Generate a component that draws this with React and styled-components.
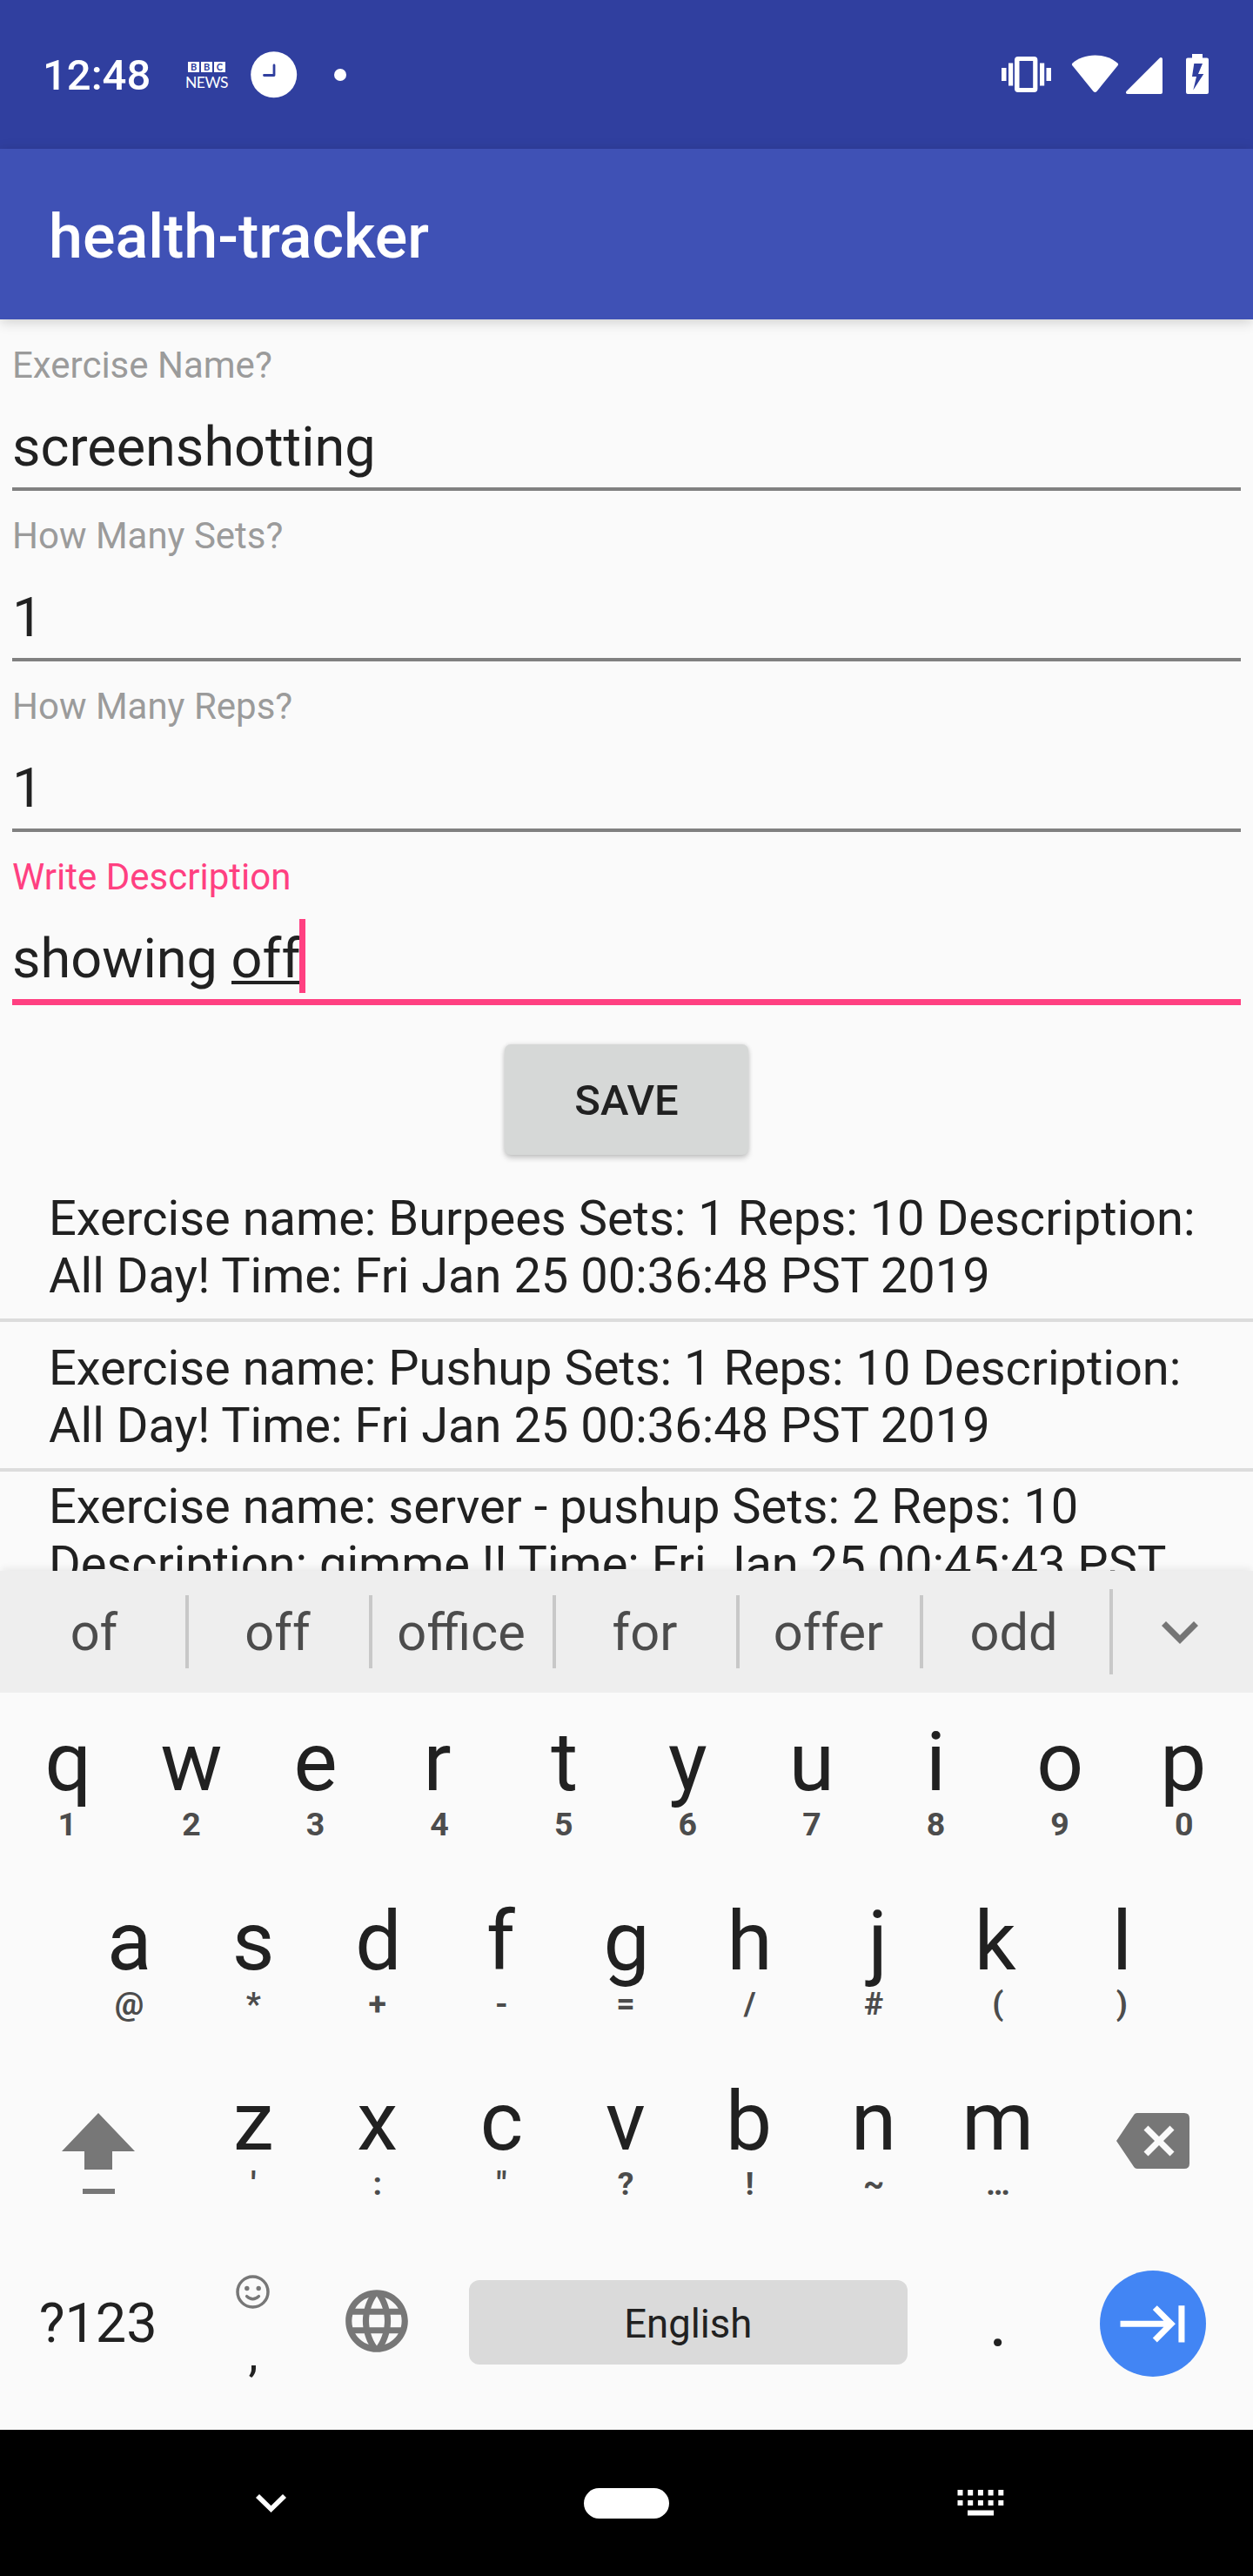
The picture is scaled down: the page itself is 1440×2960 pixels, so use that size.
import React from "react";
import styled, { createGlobalStyle, css } from "styled-components";

const GlobalStyle = createGlobalStyle`
  * { box-sizing: border-box; }
  body { margin: 0; background: #fafafa; }
`;

const Screen = styled.div`
  width: 1440px;
  height: 2960px;
  display: flex;
  flex-direction: column;
  overflow: hidden;
  background: #fafafa;
  color: #212121;
  font-family: Roboto, "Noto Sans", sans-serif;
`;

const StatusBar = styled.header`
  flex: none;
  height: 171px;
  padding: 0 51px 0 49px;
  display: flex;
  align-items: center;
  justify-content: space-between;
  background: #303f9f;
  color: #fff;
`;

const StatusGroup = styled.div`
  display: flex;
  align-items: center;
`;

const Clock = styled.span`
  width: 164px;
  font-size: 49px;
  line-height: 58px;
  font-weight: 500;
  padding-top: 2px;
`;

const News = styled.div`
  width: 49px;
  margin-right: 26px;
  display: flex;
  flex-direction: column;
  align-items: center;
  gap: 3px;
`;

const NewsBlocks = styled.div`
  display: flex;
  gap: 2px;
`;

const NewsBlock = styled.span`
  width: 13px;
  height: 12px;
  background: #fff;
  color: #303f9f;
  font: 700 11px/12px Lato, sans-serif;
  text-align: center;
`;

const NewsWord = styled.span`
  font: 400 17.5px/17px Lato, sans-serif;
  letter-spacing: -0.5px;
  height: 15px;
  white-space: nowrap;
`;

const MoreDot = styled.span`
  width: 14px;
  height: 14px;
  margin-left: 42px;
  border-radius: 50%;
  background: #fff;
`;

const Icon = styled.svg`
  display: block;
  flex: none;
  fill: currentColor;
`;

const AppBar = styled.div`
  flex: none;
  height: 196px;
  padding: 0 56px;
  display: flex;
  align-items: center;
  background: #3f51b5;
  color: #fff;
  box-shadow: 0 3px 14px rgba(0, 0, 0, 0.18);
  z-index: 1;
`;

const Title = styled.h1`
  margin: 6px 0 0;
  font-size: 70px;
  line-height: 82px;
  font-weight: 500;
`;

const Content = styled.main`
  flex: none;
  height: 1438px;
  display: flex;
  flex-direction: column;
  overflow: hidden;
`;

const Form = styled.form`
  flex: none;
  padding: 28px 14px 0;
  display: flex;
  flex-direction: column;
`;

const Field = styled.label`
  height: 196px;
  display: flex;
  flex-direction: column;
`;

const FieldLabel = styled.span`
  font-size: 42px;
  line-height: 50px;
  color: ${(p) => (p.$active ? "#ff4081" : "#9b9b9b")};
`;

const FieldValue = styled.span`
  height: 119px;
  padding-top: 32px;
  display: flex;
  align-items: flex-start;
  white-space: pre;
  font-size: 63px;
  line-height: 74px;
  font-variant-ligatures: none;
  border-bottom: 4px solid #808080;
  ${(p) =>
    p.$active &&
    css`
      height: 122px;
      border-bottom: 7px solid #ff4081;
    `}
`;

const Composing = styled.span`
  height: 74px;
  background: linear-gradient(#212121, #212121) 0 62px / 100% 4px no-repeat;
`;

const Caret = styled.span`
  width: 7px;
  height: 85px;
  margin: -9px 0 0 -1px;
  background: #ff4081;
`;

const SaveButton = styled.button`
  flex: none;
  align-self: center;
  width: 280px;
  height: 127px;
  margin-top: 21px;
  padding: 3px 0 0;
  border: 0;
  border-radius: 7px;
  background: #d6d8d7;
  color: #212121;
  font: 500 49px/58px Roboto, sans-serif;
  box-shadow: 0 4px 6px rgba(0, 0, 0, 0.18), 0 0 5px rgba(0, 0, 0, 0.12);
`;

const List = styled.ul`
  flex: none;
  margin: 20px 0 0;
  padding: 0;
  list-style: none;
`;

const Item = styled.li`
  height: 172px;
  padding: ${(p) => (p.$tall ? 8 : 21)}px 56px 0;
  border-bottom: 4px solid #dcdcdc;
  font-size: 56px;
  line-height: 65.6px;
  white-space: pre-line;
`;

const Suggestions = styled.div`
  flex: none;
  height: 140px;
  padding-left: 6px;
  display: flex;
  align-items: center;
  background: #eeeeee;
  box-shadow: 0 -5px 8px -2px rgba(0, 0, 0, 0.07);
`;

const Suggestion = styled.span`
  width: 211px;
  height: 84px;
  padding: 4px 3px 0 0;
  text-align: center;
  font-size: 59.5px;
  line-height: 78px;
  color: #4c4c4c;
  border-right: ${(p) => (p.$last ? 0 : 4)}px solid #c8c8c8;
`;

const Expand = styled.span`
  flex: 1;
  height: 98px;
  margin-left: 3px;
  display: flex;
  align-items: center;
  padding: 2px 0 0 56px;
  border-left: 4px solid #c8c8c8;
  color: #757575;
`;

const Keyboard = styled.section`
  flex: none;
  height: 847px;
  padding: 17px 8px 0 6px;
`;

const KeyRow = styled.div`
  height: 206.3px;
  display: flex;
  justify-content: center;
`;

const Key = styled.div`
  flex: none;
  width: ${(p) => p.$w || 142.6}px;
  height: 206px;
  display: flex;
  flex-direction: column;
  align-items: center;
`;

const Letter = styled.span`
  height: 106px;
  padding-top: 8px;
  margin-left: ${(p) => p.$shift * 2}px;
  font-size: 94.5px;
  line-height: 110px;
`;

const Hint = styled.span`
  padding-top: 6px;
  font-size: 37.5px;
  line-height: 44px;
  font-weight: 700;
  color: #4c4c4c;
`;

const ShiftKey = styled(Key)`
  padding-top: 53px;
  color: #777;
`;

const SymbolsLabel = styled.span`
  padding-top: 52px;
  font-size: 63px;
  line-height: 74px;
`;

const EmojiKey = styled(Key)`
  padding-top: 33px;
  color: #777;
`;

const Comma = styled.span`
  margin-top: 19px;
  font-size: 56px;
  line-height: 66px;
  color: #212121;
`;

const GlobeKey = styled(Key)`
  padding: 43px 2px 0 0;
  color: #777;
`;

const SpaceKey = styled.div`
  flex: none;
  width: 504px;
  height: 97px;
  margin: 39px 33px 0 34px;
  padding-top: 4px;
  display: flex;
  align-items: center;
  justify-content: center;
  border-radius: 12px;
  background: #dadada;
  font-size: 45.5px;
`;

const Period = styled.span`
  padding-top: 38px;
  font-size: 82px;
  line-height: 98px;
`;

const NextButton = styled.div`
  width: 122px;
  height: 122px;
  margin-top: 28px;
  padding-left: 2px;
  display: flex;
  align-items: center;
  justify-content: center;
  border-radius: 50%;
  background: #4285f4;
  color: #fff;
`;

const NavBar = styled.nav`
  flex: none;
  height: 168px;
  padding: 0 286px 0 294px;
  display: flex;
  align-items: center;
  justify-content: space-between;
  background: #000;
  color: #fff;
`;

const HomePill = styled.span`
  width: 98px;
  height: 35px;
  margin-left: 11px;
  border-radius: 18px;
  background: #fff;
`;

const fields = [
  { label: "Exercise Name?", value: "screenshotting" },
  { label: "How Many Sets?", value: "1" },
  { label: "How Many Reps?", value: "1" },
];

const exercises = [
  "Exercise name: Burpees Sets: 1 Reps: 10 Description:\nAll Day! Time: Fri Jan 25 00:36:48 PST 2019",
  "Exercise name: Pushup Sets: 1 Reps: 10 Description:\nAll Day! Time: Fri Jan 25 00:36:48 PST 2019",
  "Exercise name: server - pushup Sets: 2 Reps: 10\nDescription: gimme !! Time: Fri Jan 25 00:45:43 PST",
];

const suggestions = ["of", "off", "office", "for", "offer", "odd"];

const rows = [
  ["q1", "w2", "e3", "r4", "t5", "y6", "u7", "i8", "o9", "p0"],
  ["a@", "s*", "d+", "f-", "g=", "h/", "j#", "k(", "l)"],
  ["z'", "x:", 'c"', "v?", "b!", "n~", "m…"],
];

// Keeps letters with uneven side bearings visually centred over their hints.
const opticalShift = { q: 1, r: -2.5, t: 1, p: -1, d: 1, f: -1, g: 1, j: 4.5, k: -3, b: -1 };

const LetterKeys = ({ keys }) =>
  keys.map((k) => (
    <Key key={k}>
      <Letter $shift={opticalShift[k[0]] || 0}>{k[0]}</Letter>
      <Hint>{k[1]}</Hint>
    </Key>
  ));

export default function App() {
  return (
    <Screen>
      <GlobalStyle />
      <StatusBar>
        <StatusGroup>
          <Clock>12:48</Clock>
          <News>
            <NewsBlocks>
              <NewsBlock>B</NewsBlock>
              <NewsBlock>B</NewsBlock>
              <NewsBlock>C</NewsBlock>
            </NewsBlocks>
            <NewsWord>NEWS</NewsWord>
          </News>
          <Icon width="54" height="54" viewBox="0 0 54 54">
            <circle cx="26.700" cy="26.800" r="26.500" />
            <path
              d="M27 16V27.500H15.500"
              fill="none"
              stroke="#303f9f"
              strokeWidth="2.800"
              strokeLinecap="round"
              strokeLinejoin="round"
            />
          </Icon>
          <MoreDot />
        </StatusGroup>
        <Icon width="239" height="49" viewBox="1150 61 239 49">
          <path d="M1151 78h5.500v15h-5.500zM1159 72.500h5.200v26h-5.200zM1195 72.500h5.200v26h-5.200zM1202.500 78h5.500v15h-5.500z" />
          <path
            fillRule="evenodd"
            d="M1170 65h18.400a4 4 0 0 1 4 4v33a4 4 0 0 1-4 4h-18.400a4 4 0 0 1-4-4v-33a4 4 0 0 1 4-4zM1171.500 70v31h15.700v-31z"
          />
          <path d="M1232.600 72.500C1239 67 1248 63.500 1258.500 63.500S1278 67 1284.400 72.500Q1285.700 73.800 1284.600 75.300L1260.500 105Q1258.500 107 1256.500 105L1232.400 75.300Q1231.300 73.800 1232.600 72.500z" />
          <path d="M1296 108h38a2 2 0 0 0 2-2v-38c0-2-2-2.600-3.400-1.300l-38 38c-1.300 1.400-.6 3.300 1.400 3.300z" />
          <path
            fillRule="evenodd"
            d="M1370 62h12v4.500h5a2 2 0 0 1 2 2v37.500a2 2 0 0 1-2 2h-22a2 2 0 0 1-2-2v-37.500a2 2 0 0 1 2-2h5zM1372.300 73l-2.300 15h5l-3.700 15.500 12-18.500h-6.300l5-12z"
          />
        </Icon>
      </StatusBar>

      <AppBar>
        <Title>health-tracker</Title>
      </AppBar>

      <Content>
        <Form>
          {fields.map((f) => (
            <Field key={f.label}>
              <FieldLabel>{f.label}</FieldLabel>
              <FieldValue>{f.value}</FieldValue>
            </Field>
          ))}
          <Field>
            <FieldLabel $active>Write Description</FieldLabel>
            <FieldValue $active>
              {"showing "}
              <Composing>off</Composing>
              <Caret />
            </FieldValue>
          </Field>
        </Form>
        <SaveButton>SAVE</SaveButton>
        <List>
          {exercises.map((text, i) => (
            <Item key={text} $tall={i === 2}>
              {text}
            </Item>
          ))}
        </List>
      </Content>

      <Suggestions>
        {suggestions.map((word, i) => (
          <Suggestion key={word} $last={i === suggestions.length - 1}>
            {word}
          </Suggestion>
        ))}
        <Expand>
          <Icon width="42" height="26" viewBox="0 0 42 26">
            <path d="M5 0L21 16 37 0 42 5 21 26 0 5z" />
          </Icon>
        </Expand>
      </Suggestions>

      <Keyboard>
        <KeyRow>
          <LetterKeys keys={rows[0]} />
        </KeyRow>
        <KeyRow>
          <LetterKeys keys={rows[1]} />
        </KeyRow>
        <KeyRow>
          <ShiftKey $w={213.9}>
            <Icon width="84" height="94" viewBox="0 0 84 94">
              <path d="M42 0L84 44H58V65H26V44H0zM24 87H61V93H24z" />
            </Icon>
          </ShiftKey>
          <LetterKeys keys={rows[2]} />
          <ShiftKey $w={213.9}>
            <Icon width="84" height="64" viewBox="0 0 84 64">
              <path
                fillRule="evenodd"
                d="M24 0H78Q84 0 84 6V58Q84 64 78 64H24Q21 64 19.500 61L0 32 19.500 3Q21 0 24 0zM36.500 14.500L31.500 19.500 44 32 31.500 44.500 36.500 49.500 49 37 61.500 49.500 66.500 44.500 54 32 66.500 19.500 61.500 14.500 49 27z"
              />
            </Icon>
          </ShiftKey>
        </KeyRow>
        <KeyRow>
          <Key $w={213.9}>
            <SymbolsLabel>?123</SymbolsLabel>
          </Key>
          <EmojiKey>
            <Icon width="39" height="39" viewBox="0 0 39 39">
              <circle cx="19.500" cy="19.500" r="17.500" fill="none" stroke="currentColor" strokeWidth="3.500" />
              <circle cx="12.800" cy="15.500" r="2.700" />
              <circle cx="26.200" cy="15.500" r="2.700" />
              <path d="M12.500 24.500Q19.500 31 26.500 24.500" fill="none" stroke="currentColor" strokeWidth="3.200" strokeLinecap="round" />
            </Icon>
            <Comma>,</Comma>
          </EmojiKey>
          <GlobeKey>
            <Icon width="86" height="86" viewBox="0 0 24 24">
              <path d="M11.990 2C6.470 2 2 6.480 2 12s4.470 10 9.990 10C17.520 22 22 17.520 22 12S17.520 2 11.990 2zm6.930 6h-2.950c-.32-1.250-.78-2.450-1.380-3.560 1.840.63 3.370 1.910 4.330 3.560zM12 4.040c.83 1.200 1.480 2.530 1.910 3.960h-3.820c.43-1.430 1.080-2.760 1.910-3.960zM4.260 14C4.100 13.360 4 12.690 4 12s.1-1.360.26-2h3.380c-.08.66-.14 1.320-.14 2s.06 1.340.14 2H4.260zm.82 2h2.950c.32 1.250.78 2.450 1.380 3.560-1.840-.63-3.370-1.900-4.330-3.560zm2.950-8H5.080c.96-1.660 2.490-2.930 4.330-3.560C8.810 5.550 8.350 6.750 8.030 8zM12 19.960c-.83-1.200-1.480-2.530-1.910-3.960h3.820c-.43 1.430-1.080 2.760-1.910 3.960zM14.340 14H9.660c-.09-.66-.16-1.320-.16-2s.07-1.350.16-2h4.680c.09.65.16 1.320.16 2s-.07 1.340-.16 2zm.25 5.560c.6-1.110 1.060-2.310 1.380-3.560h2.950c-.96 1.650-2.490 2.930-4.330 3.560zM16.360 14c.08-.66.14-1.320.14-2s-.06-1.340-.14-2h3.380c.16.64.26 1.310.26 2s-.1 1.360-.26 2h-3.380z" />
            </Icon>
          </GlobeKey>
          <SpaceKey>English</SpaceKey>
          <Key>
            <Period>.</Period>
          </Key>
          <Key $w={213.9}>
            <NextButton>
              <Icon width="84.500" height="84.500" viewBox="0 0 24 24">
                <path d="M11.590 7.410L15.170 11H1v2h14.170l-3.590 3.590L13 18l6-6-6-6-1.410 1.410zM20 6v12h2V6h-2z" />
              </Icon>
            </NextButton>
          </Key>
        </KeyRow>
      </Keyboard>

      <NavBar>
        <Icon width="35" height="21" viewBox="0 0 35 21">
          <path d="M4 0L17.500 13.300 31 0 35 4 17.500 21 0 4z" />
        </Icon>
        <HomePill />
        <Icon width="54" height="30" viewBox="0 0 54 30">
          {[0, 11.7, 23.4, 35.1, 46.8].map((x) => (
            <path key={x} d={`M${x + 0.5} 0h6v6.500h-6zM${x + 0.5} 12h6v6h-6z`} />
          ))}
          <path d="M12 23.500h30v6h-30z" />
        </Icon>
      </NavBar>
    </Screen>
  );
}
